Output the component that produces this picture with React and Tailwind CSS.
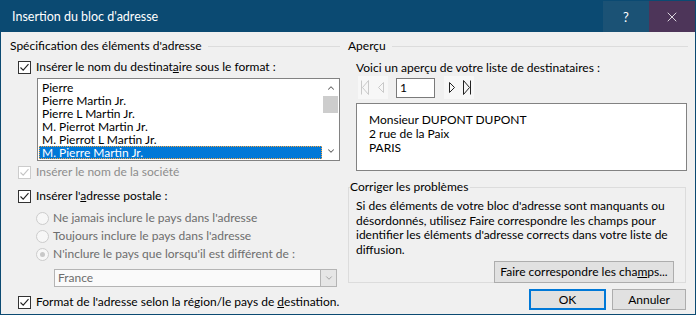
import { ChevronUp, ChevronDown, X } from "lucide-react";

const font = "font-['Lato','Noto_Sans',sans-serif]";

function Check({ disabled }) {
  return (
    <span
      className={`w-[13px] h-[13px] border bg-white flex items-center justify-center shrink-0 ${
        disabled ? "border-[#cccccc]" : "border-[#333333]"
      }`}
    >
      <svg width="11" height="11" viewBox="0 0 11 11">
        <path
          d="M1.5 5.5 L4.2 8.2 L9.5 2.2"
          fill="none"
          stroke={disabled ? "#c4c4c4" : "#222"}
          strokeWidth="1.1"
        />
      </svg>
    </span>
  );
}

function Radio({ checked }) {
  return (
    <span className="w-[13px] h-[13px] rounded-full border border-[#cccccc] bg-[#f7f7f7] flex items-center justify-center shrink-0">
      {checked && <span className="w-[5px] h-[5px] rounded-full bg-[#c8c8c8]" />}
    </span>
  );
}

function GroupTitle({ children }) {
  return (
    <div className="flex items-center h-[14px]">
      <span className="pr-[6px] whitespace-nowrap">{children}</span>
      <span className="flex-1 h-px bg-[#dcdcdc]" />
    </div>
  );
}

const names = [
  "Pierre",
  "Pierre Martin Jr.",
  "Pierre L Martin Jr.",
  "M. Pierrot Martin Jr.",
  "M. Pierrot L Martin Jr.",
  "M. Pierre Martin Jr.",
];

function Nav({ dir, disabled }) {
  const c = disabled ? "#c9c9c9" : "#222";
  return (
    <svg width="8" height="15" viewBox="0 0 8 15">
      {dir === "first" && (
        <>
          <path d="M0.5 0.5 V14.5" stroke={c} fill="none" />
          <path d="M7.5 0.5 L1.5 7.5 L7.5 14.5 Z" stroke={c} fill="none" />
        </>
      )}
      {dir === "prev" && <path d="M6.5 2.5 L1.5 7.5 L6.5 12.5 Z" stroke={c} fill="none" />}
      {dir === "next" && <path d="M1.5 2.5 L6.5 7.5 L1.5 12.5 Z" stroke={c} fill="none" />}
      {dir === "last" && (
        <>
          <path d="M7.5 0.5 V14.5" stroke={c} fill="none" />
          <path d="M0.5 0.5 L6.5 7.5 L0.5 14.5 Z" stroke={c} fill="none" />
        </>
      )}
    </svg>
  );
}

export default function App() {
  return (
    <div className={`w-[696px] h-[315px] bg-[#f0f0f0] border border-[#0b4a72] flex flex-col text-[12px] leading-[14px] text-black whitespace-nowrap ${font}`}>
      {/* Title bar */}
      <div className="h-[31px] bg-[#0b4a72] flex items-stretch shrink-0">
        <div className="flex-1 flex items-center pl-[11px] text-white text-[12.5px]">Insertion du bloc d'adresse</div>
        <div className="w-[46px] bg-[#1b5275] flex items-center justify-center text-white text-[13px]">?</div>
        <div className="w-[46px] bg-[#4d3559] flex items-center justify-center text-white">
          <X size={16} strokeWidth={1.2} />
        </div>
      </div>

      {/* Body */}
      <div className="flex flex-1 pl-[9px] gap-[8px]">
        {/* Left column */}
        <div className="w-[330px] flex flex-col pt-[7px]">
          <GroupTitle>Spécification des éléments d'adresse</GroupTitle>

          <div className="flex items-center gap-[5px] ml-[8px] mt-[7px] h-[14px]">
            <Check />
            <span>
              Insérer le nom du destinat<span className="underline">a</span>ire sous le format :
            </span>
          </div>

          <div className="ml-[27px] mt-[4px] w-[303px] h-[83px] border border-[#828282] bg-white flex">
            <div className="flex-1 pt-[2px] pl-px">
              {names.map((n, i) => (
                <div
                  key={n}
                  className={`h-[13px] leading-[13px] pl-[3px] ${
                    i === names.length - 1
                      ? "bg-[#0078d7] text-white outline-1 outline-dotted outline-[#f5a442] -outline-offset-1"
                      : ""
                  }`}
                >
                  {n}
                </div>
              ))}
            </div>
            <div className="w-[17px] flex flex-col items-center pb-[1px]">
              <div className="h-[17px] flex items-center justify-center text-[#606060]">
                <ChevronUp size={10} strokeWidth={2.5} />
              </div>
              <div className="w-[15px] h-[17px] bg-[#cdcdcd]" />
              <div className="flex-1" />
              <div className="h-[17px] flex items-center justify-center text-[#606060]">
                <ChevronDown size={10} strokeWidth={2.5} />
              </div>
            </div>
          </div>

          <div className="flex items-center gap-[5px] ml-[8px] mt-[4px] h-[14px] text-[#8d8d8d]">
            <Check disabled />
            <span>Insérer le nom de la société</span>
          </div>

          <div className="flex items-center gap-[5px] ml-[8px] mt-[10px] h-[14px]">
            <Check />
            <span>
              Insérer l'<span className="underline">a</span>dresse postale :
            </span>
          </div>

          <div className="flex flex-col gap-[4px] ml-[26px] mt-[8px] text-[#6d6d6d]">
            <div className="flex items-center gap-[4px] h-[14px]">
              <Radio />
              <span>Ne jamais inclure le pays dans l'adresse</span>
            </div>
            <div className="flex items-center gap-[4px] h-[14px]">
              <Radio />
              <span>Toujours inclure le pays dans l'adresse</span>
            </div>
            <div className="flex items-center gap-[4px] h-[14px]">
              <Radio checked />
              <span>N'inclure le pays que lorsqu'il est différent de :</span>
            </div>
          </div>

          <div className="ml-[44px] mt-[8px] w-[283px] h-[18px] border border-[#b4b4b4] bg-[#fafafa] flex text-[#6d6d6d]">
            <span className="flex-1 pl-[3px] leading-[16px]">France</span>
            <span className="w-[16px] border-l border-[#b4b4b4] bg-[#e6e6e6] flex items-center justify-center text-[#7a7a7a]">
              <ChevronDown size={10} strokeWidth={1.5} />
            </span>
          </div>

          <div className="flex items-center gap-[5px] ml-[8px] mt-[8px] h-[14px]">
            <Check />
            <span>
              Format de l'adresse selon la région/le pays de <span className="underline">d</span>estination.
            </span>
          </div>
        </div>

        {/* Right column */}
        <div className="w-[340px] flex flex-col pt-[7px]">
          <GroupTitle>Aperçu</GroupTitle>
          <div className="ml-[8px] mt-[8px] h-[14px]">Voici un aperçu de votre liste de destinataires :</div>

          <div className="flex items-center ml-[10px] mt-[1px] h-[23px]">
            <div className="w-[30px] h-[23px] bg-[#f7f7f7] flex items-center justify-center gap-[8px]">
              <Nav dir="first" disabled />
              <Nav dir="prev" disabled />
            </div>
            <div className="ml-[8px] w-[39px] h-[20px] border border-[#7a7a7a] bg-white pl-[3px] leading-[18px]">1</div>
            <div className="ml-[9px] w-[30px] h-[23px] bg-[#f7f7f7] flex items-center justify-center gap-[7px]">
              <Nav dir="next" />
              <Nav dir="last" />
            </div>
          </div>

          <div className="ml-[8px] mt-[4px] w-[331px] h-[68px] border border-[#828282] bg-white pl-[12px] pt-[9px]">
            <div>Monsieur DUPONT DUPONT</div>
            <div>2 rue de la Paix</div>
            <div>PARIS</div>
          </div>

          <div className="relative mt-[16px] w-[338px] h-[96px] border border-[#dcdcdc] pl-[7px] pr-[8px] pt-[11px]">
            <span className="absolute -top-[8px] left-[1px] bg-[#f0f0f0] pr-[2px]">Corriger les problèmes</span>
            <div className="leading-[14.5px]">
              <div>Si des éléments de votre bloc d'adresse sont manquants ou</div>
              <div>désordonnés, utilisez Faire correspondre les champs pour</div>
              <div>identifier les éléments d'adresse corrects dans votre liste de</div>
              <div>diffusion.</div>
            </div>
            <div className="flex justify-end mt-[4px] pr-[3px]">
              <button className="w-[180px] h-[22px] border border-[#adadad] bg-[#e1e1e1]">
                Faire correspondre les cha<span className="underline">m</span>ps...
              </button>
            </div>
          </div>

          <div className="flex justify-end gap-[6px] mt-[6px] pr-[2px]">
            <button className="w-[77px] h-[21px] border-2 border-[#0078d7] bg-[#e1e1e1]">OK</button>
            <button className="w-[74px] h-[21px] border border-[#adadad] bg-[#e1e1e1]">Annuler</button>
          </div>
        </div>
      </div>
    </div>
  );
}
